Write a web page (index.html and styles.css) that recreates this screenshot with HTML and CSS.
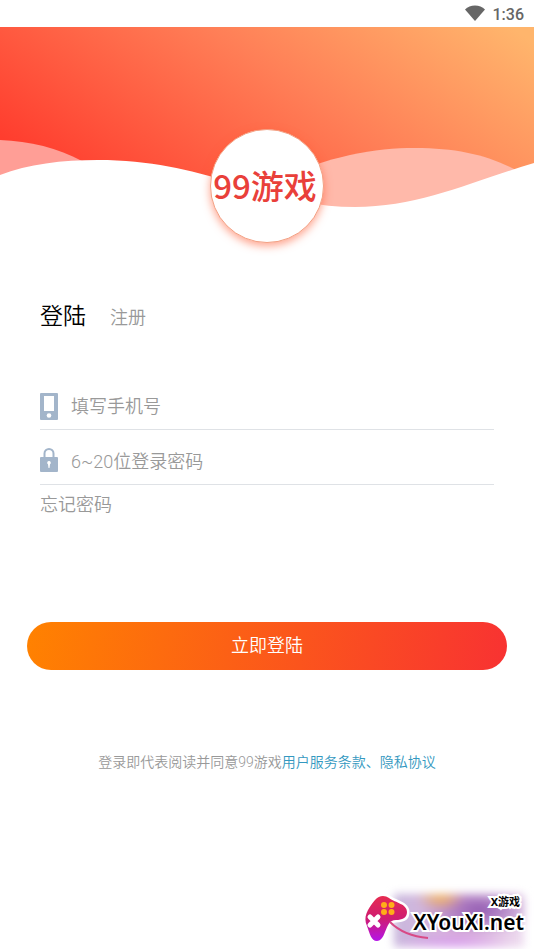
FILE: index.html
```html
<!DOCTYPE html>
<html lang="zh-CN">
<head>
<meta charset="utf-8">
<meta name="viewport" content="width=device-width, initial-scale=1">
<title>99游戏 登陆</title>
<link rel="stylesheet" href="styles.css">
</head>
<body>
<div class="status">
  <svg class="wifi" viewBox="0 0 20 16" aria-hidden="true"><path d="M0 4.500Q4 .5 10 .5T20 4.500L10 16Z"/></svg>
  <span>1:36</span>
</div>
<header class="hero">
  <svg class="waves" viewBox="0 0 534 186" aria-hidden="true">
    <defs>
      <linearGradient id="sky" gradientUnits="userSpaceOnUse" x1="35" y1="134" x2="255" y2="-180">
        <stop offset="0" stop-color="#ff3d2e"/>
        <stop offset=".55" stop-color="#ff7f57"/>
        <stop offset="1" stop-color="#ffb56c"/>
      </linearGradient>
    </defs>
    <path fill="url(#sky)" d="M0 0H534V186H0Z"/>
    <path fill="#ff9e96" d="M0 113C30 114 58 121 82 134L0 150Z"/>
    <path fill="#ffb9aa" d="M270 156C330 128 375 121 415 121C457 121 487 128 516 143L400 186H270Z"/>
    <path fill="#fff" d="M0 148C28 137 62 133 98 133C150 133 190 143 230 155C276 169 310 180 355 180C420 180 470 155 534 136V187H0Z"/>
  </svg>
  <h1 class="logo">99游戏</h1>
</header>
<main>
  <form class="login">
    <nav class="tabs">
      <a class="tab current" href="#login">登陆</a>
      <a class="tab" href="#register">注册</a>
    </nav>
    <div class="field">
      <svg class="icon" viewBox="0 0 18 28" aria-hidden="true"><path fill="#a3b5ca" d="M1 1H17Q18 1 18 2V27Q18 28 17 28H1Q0 28 0 27V2Q0 1 1 1Z"/><path fill="#fff" d="M4 4H14V19H4Z"/><circle cx="9" cy="23.500" r="2.300" fill="#fff"/></svg>
      <input type="tel" aria-label="手机号" placeholder="填写手机号">
    </div>
    <div class="field">
      <svg class="icon" viewBox="0 0 18 28" aria-hidden="true"><path fill="none" stroke="#a3b5ca" stroke-width="2" d="M4.500 11V6.500A4.500 4.500 0 0 1 13.500 6.500V11"/><rect y="10" width="18" height="15" rx="1" fill="#a3b5ca"/><path fill="#fff" d="M9 14a1.800 1.800 0 0 1 1 3.300L9.500 21H8.500L8 17.300A1.800 1.800 0 0 1 9 14Z"/></svg>
      <input type="password" aria-label="登录密码" placeholder="6~20位登录密码">
    </div>
    <a class="forgot" href="#forgot">忘记密码</a>
    <button class="submit" type="submit">立即登陆</button>
  </form>
  <p class="terms">登录即代表阅读并同意99游戏<a href="#terms">用户服务条款</a><a href="#privacy">、隐私协议</a></p>
</main>
<aside class="mark">
  <svg class="pad" viewBox="0 0 50 50" aria-hidden="true">
    <defs><linearGradient id="pad" x1="0" y1="0" x2="0" y2="1"><stop offset="0" stop-color="#e62b50"/><stop offset=".5" stop-color="#cf1c72"/><stop offset="1" stop-color="#b414e8"/></linearGradient></defs>
    <path fill="url(#pad)" stroke="#fff" stroke-width="5" paint-order="stroke" d="M13 6C17 1 23 1 27 4C34 9 45 10 45 18C45 24 40 26 34 26C27 26 26 31 23 38C21 44 18 47 15 47C9 47 8 40 5 32C1 23 5 16 13 6Z"/>
    <path fill="none" stroke="#d84a86" stroke-width="2" d="M28 28Q42 42 66 44"/>
    <g fill="#ffae18"><circle cx="22" cy="11" r="3"/><circle cx="29.500" cy="11" r="3"/><circle cx="22" cy="18" r="3"/><circle cx="29.500" cy="18" r="3"/></g>
    <path stroke="#fff" stroke-width="5" stroke-linecap="round" d="M8 23L16 31M16 23L8 31"/>
  </svg>
  <div class="words"><span class="small">X游戏</span><span class="site">XYouXi.net</span></div>
</aside>
</body>
</html>
```
FILE: styles.css
```css
* { box-sizing: border-box; }

body {
  margin: 0;
  min-height: 100vh;
  position: relative;
  overflow-x: hidden;
  background: #fff;
  color: #999;
  font-family: Roboto, "Noto Sans CJK SC", sans-serif;
  font-size: 18px;
  font-weight: 350;
}

a { color: inherit; text-decoration: none; }

.status {
  display: flex;
  justify-content: flex-end;
  align-items: center;
  gap: 8px;
  height: 27px;
  padding: 2px 10px 0 0;
  color: #666;
  font-size: 16px;
  font-weight: 500;
}
.wifi { width: 20px; height: 16px; fill: #666; margin-bottom: 4px; }

.hero { position: relative; }
.waves { display: block; width: 100%; }

.logo {
  position: absolute;
  left: 50%;
  bottom: -30px;
  transform: translateX(-50%);
  display: flex;
  justify-content: center;
  align-items: center;
  width: 114px;
  height: 114px;
  margin: 0;
  padding: 0 4px 2px 0;
  border: 1px solid #f3a184;
  border-radius: 50%;
  background: #fff;
  box-shadow: 0 3px 8px rgba(255, 90, 50, .55);
  color: #e9403a;
  font: 500 33px "Noto Sans CJK SC", sans-serif;
  white-space: nowrap;
}

.login {
  display: flex;
  flex-direction: column;
  padding: 86px 27px 0;
}
.tabs {
  display: flex;
  align-items: baseline;
  gap: 24px;
  margin: 0 13px 39px;
  line-height: 36px;
}
.current { color: #000; font-size: 23px; }

.field {
  display: flex;
  align-items: center;
  gap: 13px;
  height: 55px;
  margin: 0 13px;
  padding-top: 8px;
  border-bottom: 1px solid #dfe2e6;
}
.icon { width: 18px; height: 28px; }
.field input {
  flex: 1;
  min-width: 0;
  padding: 0;
  border: 0;
  outline: 0;
  background: none;
  color: #333;
  font: inherit;
}
.field input::placeholder { color: #999; opacity: 1; }

.forgot {
  align-self: flex-start;
  margin: 6px 13px 0;
  line-height: 27px;
}

.submit {
  height: 48px;
  margin-top: 104px;
  padding: 0 0 4px;
  border: 0;
  border-radius: 24px;
  background: linear-gradient(100deg, #ff8200, #f83232);
  color: #fff;
  font: inherit;
}

.terms {
  margin: 80px 0 0;
  font-size: 14px;
  line-height: 24px;
  text-align: center;
}
.terms a { color: #3398c0; }

.mark {
  position: absolute;
  right: 10px;
  bottom: 0;
  display: flex;
  align-items: flex-start;
  gap: 1px;
  color: #000;
  font-family: "Noto Sans", "Noto Sans CJK SC", sans-serif;
}
.mark::before {
  content: "";
  position: absolute;
  inset: 0 0 2px 32px;
  background:
    radial-gradient(24px 12px at 36% 8%, #f3b45e, transparent),
    radial-gradient(60px 26px at 66% 30%, #9058b0, transparent),
    radial-gradient(60px 16px at 46% 100%, #d79af0, transparent),
    linear-gradient(90deg, #c9b8dd, #dcb3dc 50%, #eedcf0);
  filter: blur(4px);
}
.pad { position: relative; width: 50px; height: 50px; overflow: visible; }
.words {
  position: relative;
  display: flex;
  flex-direction: column;
  -webkit-text-stroke: 4px #fff;
  paint-order: stroke fill;
}
.small {
  align-self: flex-end;
  padding-right: 4px;
  font-size: 11px;
  font-weight: 700;
  line-height: 16px;
}
.site { font-size: 21px; font-weight: 600; line-height: 24px; padding-bottom: 15px; }
```
